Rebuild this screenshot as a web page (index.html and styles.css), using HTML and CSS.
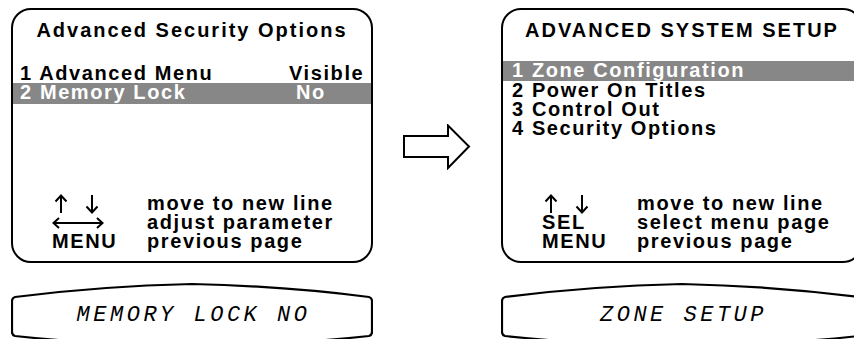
FILE: index.html
```html
<!DOCTYPE html>
<html lang="en">
<head>
    <meta charset="UTF-8">
    <meta name="viewport" content="width=device-width, initial-scale=1.0">
    <title>Advanced Setup Menus</title>
    <link rel="stylesheet" href="styles.css">
</head>
<body>
    <div class="page">

        <div class="column">
            <div class="screen">
                <h1 class="screen-title">Advanced Security Options</h1>
                <div class="menu menu-security">
                    <div class="menu-row">
                        <span>1 Advanced Menu</span>
                        <span class="menu-value">Visible</span>
                    </div>
                    <div class="menu-row selected">
                        <span>2 Memory Lock</span>
                        <span class="menu-value menu-value-short">No</span>
                    </div>
                </div>
                <div class="legend">
                    <div class="legend-key">
                        <svg class="icon-updown" width="46" height="20" viewBox="0 0 46 20">
                            <path d="M7 19V2M1.5 7.5L7 1.5l5.5 6M38 1v17M32.5 12.5L38 18.5l5.5-6" fill="none" stroke="#000" stroke-width="2"/>
                        </svg>
                    </div>
                    <div>move to new line</div>
                    <div class="legend-key">
                        <svg class="icon-leftright" width="52" height="12" viewBox="0 0 52 12">
                            <path d="M1.5 6h49M7 1L1.5 6 7 11M45 1l5.5 5L45 11" fill="none" stroke="#000" stroke-width="2"/>
                        </svg>
                    </div>
                    <div>adjust parameter</div>
                    <div class="legend-key">MENU</div>
                    <div>previous page</div>
                </div>
            </div>
            <div class="lcd">
                <svg class="lcd-frame" width="362" height="62" viewBox="0 0 362 62">
                    <path d="M4 15Q90 4 181 2Q272 4 358 15Q361 16 361 19V50Q361 53 358 54Q272 63 181 65Q90 63 4 54Q1 53 1 50V19Q1 16 4 15Z" fill="#fff" stroke="#000" stroke-width="2.2"/>
                </svg>
                <div class="lcd-text">MEMORY LOCK NO</div>
            </div>
        </div>

        <div class="arrow-col">
            <svg class="next-arrow" width="68" height="46" viewBox="0 0 68 46">
                <path d="M1 12H45V1.5L66 22.5 45 44V33H1Z" fill="#fff" stroke="#000" stroke-width="2"/>
            </svg>
        </div>

        <div class="column">
            <div class="screen">
                <h1 class="screen-title">ADVANCED SYSTEM SETUP</h1>
                <div class="menu menu-system">
                    <div class="menu-row selected">1 Zone Configuration</div>
                    <div class="menu-row">2 Power On Titles</div>
                    <div class="menu-row">3 Control Out</div>
                    <div class="menu-row">4 Security Options</div>
                </div>
                <div class="legend">
                    <div class="legend-key">
                        <svg class="icon-updown" width="46" height="20" viewBox="0 0 46 20">
                            <path d="M7 19V2M1.5 7.5L7 1.5l5.5 6M38 1v17M32.5 12.5L38 18.5l5.5-6" fill="none" stroke="#000" stroke-width="2"/>
                        </svg>
                    </div>
                    <div>move to new line</div>
                    <div class="legend-key">SEL</div>
                    <div>select menu page</div>
                    <div class="legend-key">MENU</div>
                    <div>previous page</div>
                </div>
            </div>
            <div class="lcd">
                <svg class="lcd-frame" width="362" height="62" viewBox="0 0 362 62">
                    <path d="M4 15Q90 4 181 2Q272 4 358 15Q361 16 361 19V50Q361 53 358 54Q272 63 181 65Q90 63 4 54Q1 53 1 50V19Q1 16 4 15Z" fill="#fff" stroke="#000" stroke-width="2.2"/>
                </svg>
                <div class="lcd-text">ZONE SETUP</div>
            </div>
        </div>

    </div>
</body>
</html>
```

FILE: styles.css
```css
body {
    margin: 0;
    background: #fff;
    color: #000;
    font-family: "Liberation Sans", Arial, sans-serif;
    overflow: hidden;
}

.page {
    display: flex;
    padding: 8px 0 0 11px;
    width: max-content;
}

.column {
    width: 362px;
    flex-shrink: 0;
}

.screen {
    box-sizing: border-box;
    height: 255px;
    border: 2px solid #000;
    border-radius: 20px;
    display: flex;
    flex-direction: column;
    font-size: 20px;
    font-weight: bold;
    letter-spacing: 1.6px;
}

.screen-title {
    margin: 0;
    padding-top: 10px;
    font-size: 20px;
    line-height: 20px;
    letter-spacing: 2px;
    text-align: center;
}

.menu {
    line-height: 19px;
}

.menu-security {
    margin-top: 24px;
    padding: 0 7px;
}

.menu-security .menu-row {
    display: flex;
}

.menu-security .selected {
    margin: 0 -7px;
    padding: 0 7px 2px;
}

.menu-system {
    margin-top: 21px;
}

.menu-system .menu-row {
    padding-left: 9px;
}

.menu-system .selected {
    padding-bottom: 1px;
}

.selected {
    background: #878787;
    color: #fff;
}

.menu-value {
    margin-left: auto;
    width: 75px;
}

.menu-value-short {
    padding-left: 7px;
    box-sizing: border-box;
}

.legend {
    margin-top: auto;
    padding: 0 0 10px 39px;
    display: grid;
    grid-template-columns: 95px auto;
    grid-auto-rows: 19px;
    line-height: 19px;
}

.legend-key {
    display: flex;
    align-items: center;
}

.icon-updown {
    margin-left: 2px;
}

.lcd {
    position: relative;
    height: 56px;
    margin-top: 20px;
}

.lcd-frame {
    position: absolute;
    left: 0;
    top: -1px;
}

.lcd-text {
    position: relative;
    padding: 20px 0 0 3px;
    font-family: "Liberation Mono", "DejaVu Sans Mono", monospace;
    font-style: italic;
    font-size: 22px;
    line-height: 26px;
    letter-spacing: 3.5px;
    text-align: center;
}

.arrow-col {
    width: 128px;
    flex-shrink: 0;
    display: flex;
    justify-content: center;
    align-items: flex-start;
    padding-top: 116px;
}
```
